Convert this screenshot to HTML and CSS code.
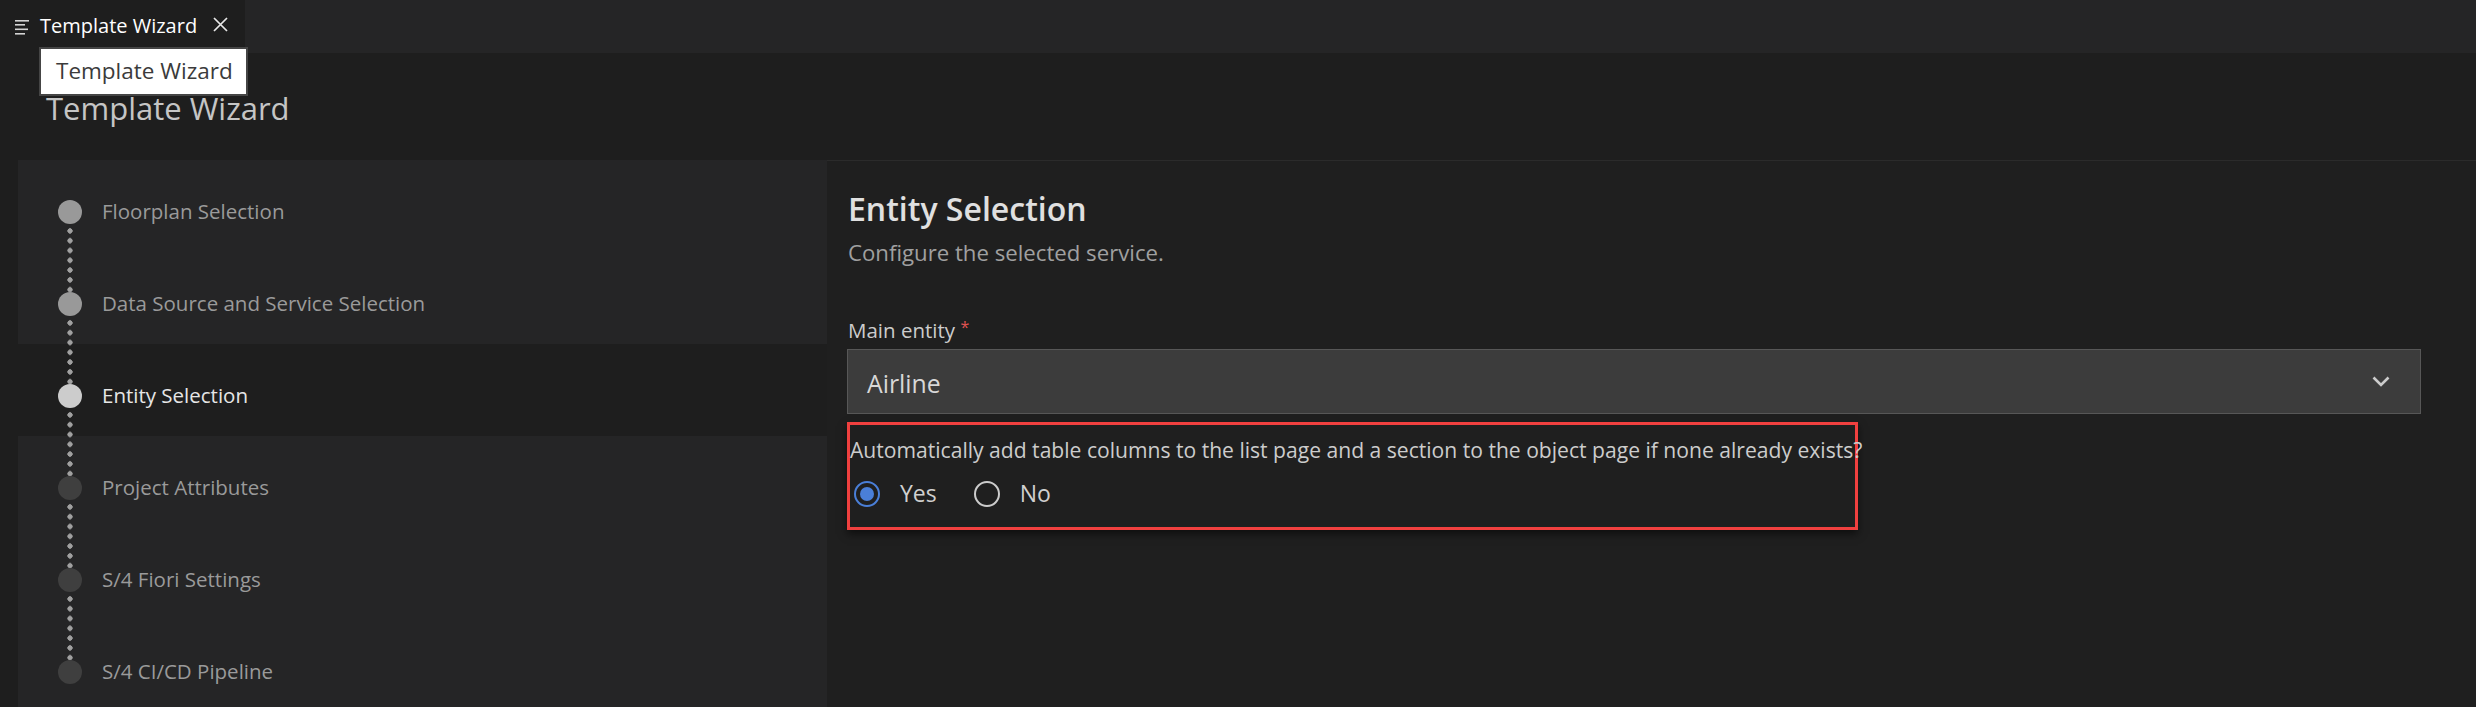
FILE: index.html
```html
<!DOCTYPE html>
<html lang="en">
<head>
<meta charset="utf-8">
<title>Template Wizard</title>
<link rel="stylesheet" href="styles.css">
</head>
<body>
<div class="tabbar">
  <div class="tab">
    <svg class="tab-icon" width="15" height="16" viewBox="0 0 15 16">
      <rect x="0" y="1" width="14" height="1.6" fill="#d4d4d4"/>
      <rect x="0" y="5" width="10" height="1.6" fill="#d4d4d4"/>
      <rect x="0" y="9.5" width="13" height="1.6" fill="#d4d4d4"/>
      <rect x="0" y="14" width="10" height="1.6" fill="#d4d4d4"/>
    </svg>
    <span class="tab-label">Template Wizard</span>
    <svg class="tab-close" width="15" height="15" viewBox="0 0 15 15">
      <path d="M1 1 L14 14 M14 1 L1 14" stroke="#e8e8e8" stroke-width="1.7" fill="none"/>
    </svg>
  </div>
  <div class="tooltip">Template Wizard</div>
</div>

<div class="page-title">Template Wizard</div>

<div class="main">
  <nav class="steps">
    <div class="step done">
      <span class="dot"></span><span class="label">Floorplan Selection</span><span class="connector"></span>
    </div>
    <div class="step done">
      <span class="dot"></span><span class="label">Data Source and Service Selection</span><span class="connector"></span>
    </div>
    <div class="step current">
      <span class="dot"></span><span class="label">Entity Selection</span><span class="connector"></span>
    </div>
    <div class="step">
      <span class="dot"></span><span class="label">Project Attributes</span><span class="connector"></span>
    </div>
    <div class="step">
      <span class="dot"></span><span class="label">S/4 Fiori Settings</span><span class="connector"></span>
    </div>
    <div class="step">
      <span class="dot"></span><span class="label">S/4 CI/CD Pipeline</span>
    </div>
  </nav>

  <section class="content">
    <h1 class="content-title">Entity Selection</h1>
    <p class="content-sub">Configure the selected service.</p>

    <label class="field-label">Main entity <span class="req">*</span></label>
    <div class="select">
      <span class="select-value">Airline</span>
      <svg class="chevron" width="18" height="11" viewBox="0 0 18 11">
        <path d="M1.5 1.5 L9 9 L16.5 1.5" stroke="#cccccc" stroke-width="2.6" fill="none"/>
      </svg>
    </div>

    <div class="highlight">
      <p class="question">Automatically add table columns to the list page and a section to the object page if none already exists?</p>
      <div class="radios">
        <span class="radio checked"></span><span class="radio-label">Yes</span>
        <span class="radio"></span><span class="radio-label">No</span>
      </div>
    </div>
  </section>
</div>
</body>
</html>
```

FILE: styles.css
```css
* { box-sizing: border-box; }

html, body {
  margin: 0;
  padding: 0;
}

body {
  width: 2476px;
  height: 707px;
  overflow: hidden;
  background: #1e1e1e;
  font-family: "Open Sans", "Noto Sans", sans-serif;
  color: #cccccc;
}

.tabbar {
  position: relative;
  height: 53px;
  background: #252526;
  display: flex;
}

.tab {
  width: 245px;
  height: 53px;
  background: #1e1e1e;
  display: flex;
  align-items: center;
  padding-left: 15px;
}

.tab-icon { margin-right: 10px; margin-top: 1px; }

.tab-label {
  font-size: 20px;
  color: #ffffff;
  line-height: 53px;
  margin-top: -3px;
}

.tab-close { margin-left: 16px; margin-top: -4px; }

.tooltip {
  position: absolute;
  left: 39px;
  top: 47px;
  width: 209px;
  height: 49px;
  background: #ffffff;
  border: 2px solid #454545;
  color: #3b3b3b;
  font-size: 22.5px;
  line-height: 43px;
  padding-left: 15px;
  z-index: 2;
}

.page-title {
  height: 107px;
  padding: 35px 0 0 46px;
  font-size: 31px;
  line-height: 40px;
  color: #c5c5c5;
}

.main {
  display: flex;
  padding-left: 18px;
  height: 547px;
}

.steps {
  width: 809px;
  background: #252526;
  display: flex;
  flex-direction: column;
}

.step {
  position: relative;
  height: 92px;
  display: flex;
  align-items: center;
  padding: 40px 0 28px 40px;
}

.step.current { background: #1e1e1e; }

.dot {
  width: 24px;
  height: 24px;
  border-radius: 50%;
  background: #3f3f3f;
  flex: none;
}

.step.done .dot { background: #999999; }
.step.current .dot { background: #cccccc; }

.label {
  margin-left: 20px;
  font-size: 20.5px;
  color: #9a9a9a;
  line-height: 24px;
  margin-top: -2px;
}

.step.current .label { color: #e6e6e6; }

.connector {
  position: absolute;
  left: 49px;
  top: 66px;
  width: 6px;
  height: 66px;
  background-image: radial-gradient(circle, #a0a0a0 2.4px, transparent 2.9px);
  background-size: 6px 9.8px;
  background-position: 0 0;
  z-index: 1;
}

.content {
  flex: 1;
  background: #1f1f1f;
  border-top: 1px solid #2b2b2b;
  padding: 28px 0 0 20px;
}

.content-title {
  margin: 0;
  font-size: 32px;
  font-weight: 600;
  line-height: 40px;
  color: #e0e0e0;
  padding-left: 1px;
}

.content-sub {
  margin: 10px 0 0 1px;
  font-size: 22.2px;
  line-height: 28px;
  color: #a0a0a0;
}

.field-label {
  display: block;
  margin: 46px 0 0 1px;
  font-size: 20.5px;
  line-height: 28px;
  color: #cccccc;
}

.req { color: #e05252; font-size: 16px; vertical-align: 5px; }

.select {
  margin-top: 5px;
  width: 1574px;
  height: 65px;
  background: #3c3c3c;
  border: 1px solid #575757;
  display: flex;
  align-items: center;
  justify-content: space-between;
  padding: 0 30px 0 19px;
}

.select-value {
  font-size: 24.8px;
  color: #d8d8d8;
  margin-top: 2px;
}

.highlight {
  margin-top: 8px;
  width: 1011px;
  height: 108px;
  border: 3px solid #f0403f;
  box-shadow: 0 4px 8px rgba(0, 0, 0, 0.55);
  padding: 12px 0 0 0;
}

.question {
  margin: 0;
  font-size: 21.1px;
  line-height: 26px;
  color: #cccccc;
  white-space: nowrap;
}

.radios {
  display: flex;
  align-items: center;
  height: 30px;
  margin-top: 16px;
  padding-left: 4px;
}

.radio {
  width: 26px;
  height: 26px;
  border-radius: 50%;
  border: 2.5px solid #cccccc;
  flex: none;
  position: relative;
}

.radio.checked {
  border-color: #4a7fd8;
}

.radio.checked::after {
  content: "";
  position: absolute;
  left: 3.5px;
  top: 3.5px;
  width: 14px;
  height: 14px;
  border-radius: 50%;
  background: #4a7fd8;
}

.radio-label {
  margin-left: 20px;
  margin-right: 37px;
  font-size: 23px;
  color: #d0d0d0;
  margin-top: -2px;
}
```
